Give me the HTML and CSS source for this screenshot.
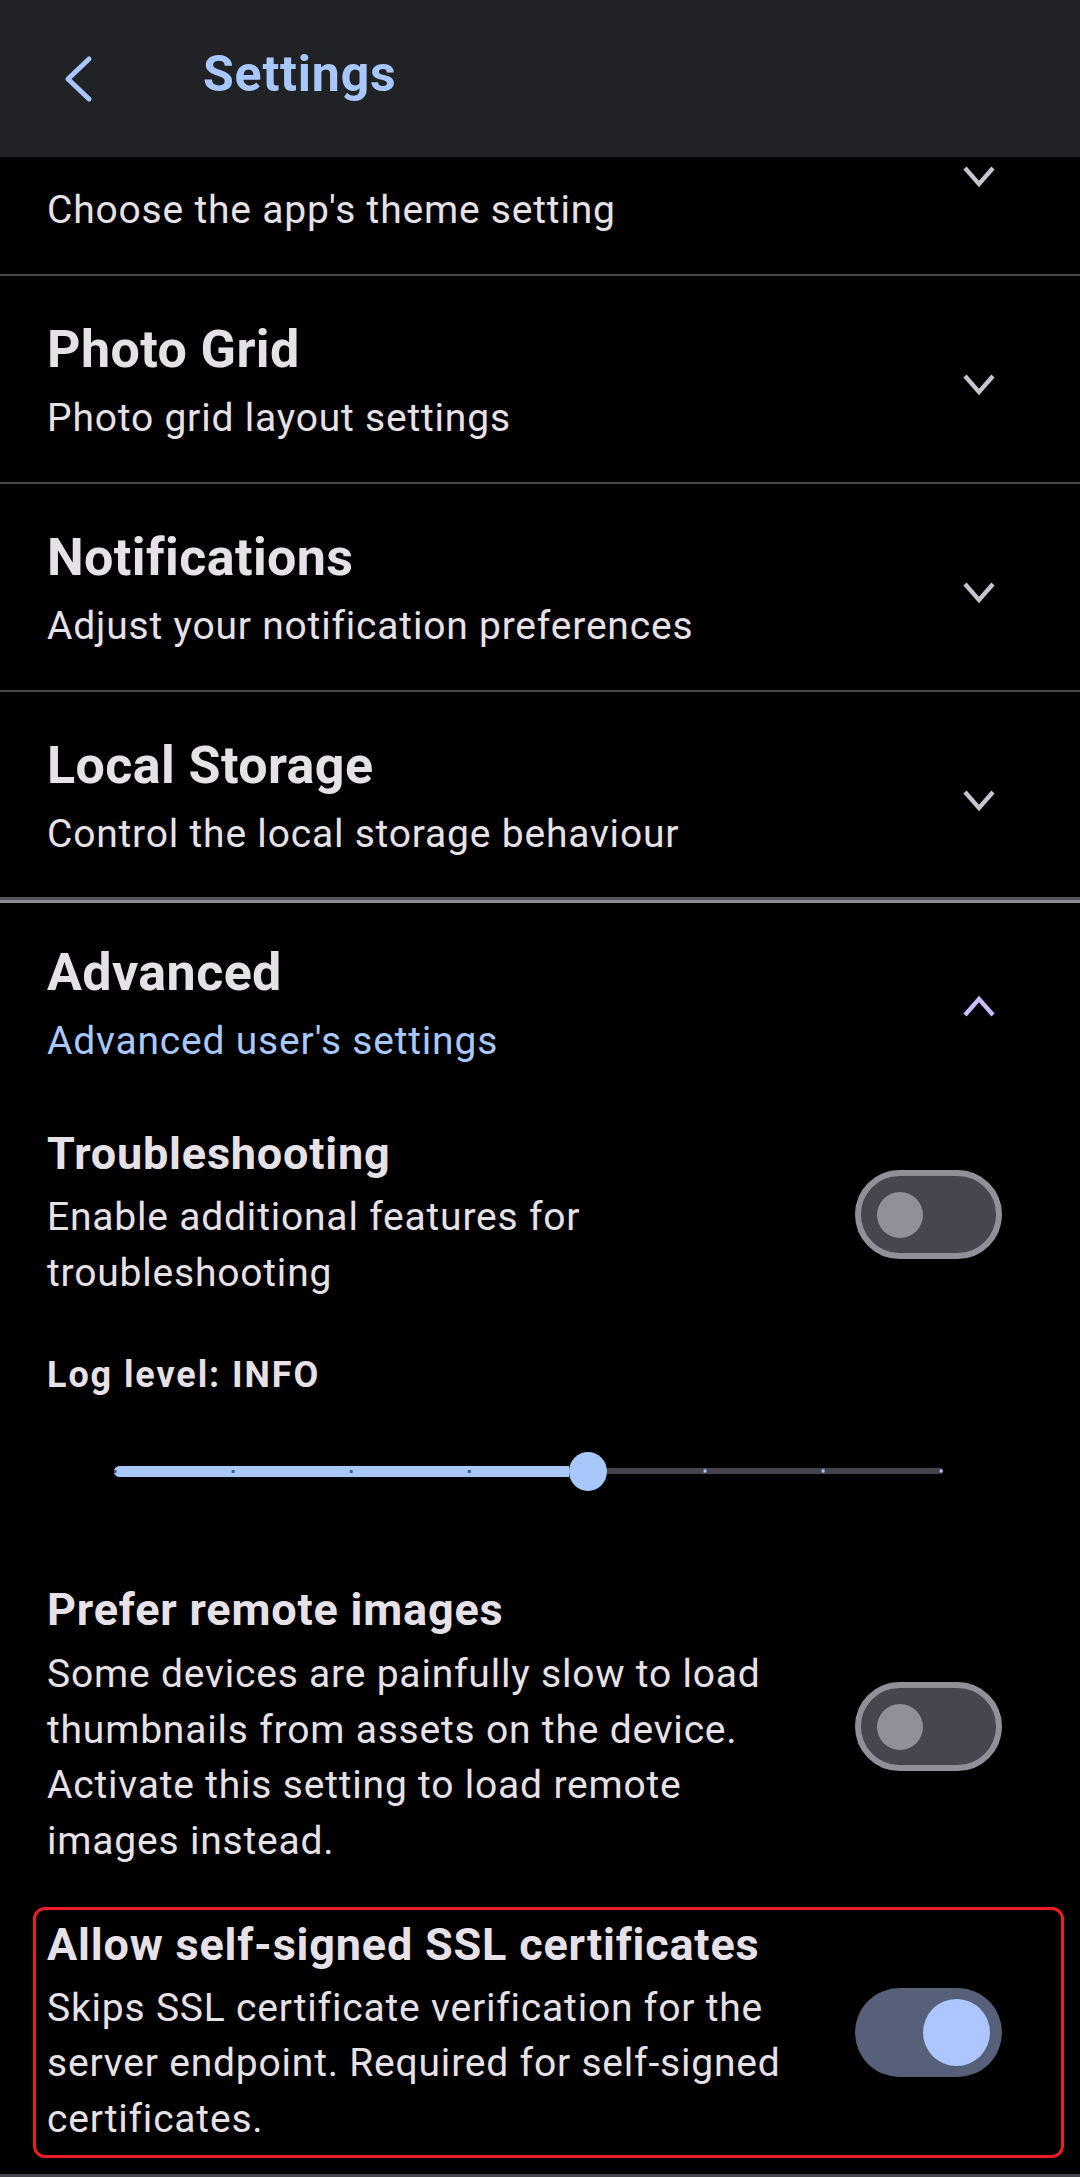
FILE: index.html
```html
<!DOCTYPE html>
<html lang="en">
<head>
<meta charset="utf-8">
<title>Settings</title>
<link rel="stylesheet" href="styles.css">
</head>
<body>
<header class="appbar">
  <svg class="back" width="36" height="52" viewBox="0 0 36 52" aria-hidden="true">
    <polyline points="29,6 8,26 29,46" fill="none" stroke="#a8c7fa" stroke-width="5" stroke-linecap="round" stroke-linejoin="round"/>
  </svg>
  <h1 class="appbar-title">Settings</h1>
</header>
<main class="viewport">
  <div class="list">
    <section class="tile tile-first">
      <div class="tile-text">
        <div class="tile-title-spacer" aria-hidden="true"></div>
        <div class="tile-sub">Choose the app's theme setting</div>
      </div>
      <svg class="chev" width="36" height="24" viewBox="0 0 36 24" aria-hidden="true"><polyline points="4,4 18,20 32,4" fill="none" stroke="#cac4d0" stroke-width="4.2"/></svg>
    </section>
    <section class="tile">
      <div class="tile-text">
        <div class="tile-title">Photo Grid</div>
        <div class="tile-sub">Photo grid layout settings</div>
      </div>
      <svg class="chev" width="36" height="24" viewBox="0 0 36 24" aria-hidden="true"><polyline points="4,4 18,20 32,4" fill="none" stroke="#cac4d0" stroke-width="4.2"/></svg>
    </section>
    <section class="tile">
      <div class="tile-text">
        <div class="tile-title">Notifications</div>
        <div class="tile-sub">Adjust your notification preferences</div>
      </div>
      <svg class="chev" width="36" height="24" viewBox="0 0 36 24" aria-hidden="true"><polyline points="4,4 18,20 32,4" fill="none" stroke="#cac4d0" stroke-width="4.2"/></svg>
    </section>
    <section class="tile tile-last">
      <div class="tile-text">
        <div class="tile-title">Local Storage</div>
        <div class="tile-sub">Control the local storage behaviour</div>
      </div>
      <svg class="chev" width="36" height="24" viewBox="0 0 36 24" aria-hidden="true"><polyline points="4,4 18,20 32,4" fill="none" stroke="#cac4d0" stroke-width="4.2"/></svg>
    </section>

    <section class="expanded">
      <div class="tile tile-head">
        <div class="tile-text">
          <div class="tile-title">Advanced</div>
          <div class="tile-sub tile-sub-accent">Advanced user's settings</div>
        </div>
        <svg class="chev" width="36" height="24" viewBox="0 0 36 24" aria-hidden="true"><polyline points="4,20 18,4 32,20" fill="none" stroke="#cdbdff" stroke-width="4.2"/></svg>
      </div>

      <div class="setting setting-trouble">
        <div class="setting-text">
          <div class="setting-title">Troubleshooting</div>
          <div class="setting-sub">Enable additional features for troubleshooting</div>
        </div>
        <div class="switch switch-off"><span class="knob"></span></div>
      </div>

      <div class="log-level">Log level: INFO</div>

      <div class="slider">
        <div class="track-active"></div>
        <div class="thumb"></div>
        <div class="track-inactive"></div>
      </div>

      <div class="setting setting-prefer">
        <div class="setting-text">
          <div class="setting-title">Prefer remote images</div>
          <div class="setting-sub">Some devices are painfully slow to load thumbnails from assets on the device. Activate this setting to load remote images instead.</div>
        </div>
        <div class="switch switch-off"><span class="knob"></span></div>
      </div>

      <div class="setting setting-highlight">
        <div class="setting-text">
          <div class="setting-title">Allow self-signed SSL certificates</div>
          <div class="setting-sub">Skips SSL certificate verification for the server endpoint. Required for self-signed certificates.</div>
        </div>
        <div class="switch switch-on"><span class="knob"></span></div>
      </div>
    </section>
    <div class="bottom-divider"></div>
  </div>
</main>
</body>
</html>
```

FILE: styles.css
```css
html, body {
  margin: 0;
  padding: 0;
}
body {
  width: 1080px;
  height: 2177px;
  overflow: hidden;
  background: #000;
  color: #e6e1e6;
  font-family: Roboto, "Noto Sans", "Liberation Sans", sans-serif;
  display: flex;
  flex-direction: column;
}

/* App bar */
.appbar {
  height: 157px;
  flex: 0 0 157px;
  background: #212226;
  display: flex;
  align-items: flex-start;
}
.back {
  display: block;
  margin: 53px 0 0 60px;
}
.appbar-title {
  margin: 46px 0 0 107px;
  font-size: 50px;
  line-height: 56px;
  font-weight: 700;
  color: #a8c7fa;
  letter-spacing: 0.8px;
}

/* Scrolled list */
.viewport {
  flex: 1 1 auto;
  overflow: hidden;
}
.list {
  display: flex;
  flex-direction: column;
}

.tile {
  display: flex;
  align-items: center;
  padding: 46px 83px 36px 47px;
  border-bottom: 2px solid #48464d;
}
.tile-first {
  margin-top: -89px;
}
.tile-last {
  padding-bottom: 35px;
  border-bottom: none;
}
.tile-text {
  flex: 1 1 auto;
}
.tile-title {
  font-size: 52px;
  line-height: 56px;
  font-weight: 700;
  letter-spacing: 0.4px;
  color: #e6e1e6;
}
.tile-title-spacer {
  height: 56px;
}
.tile-sub {
  margin-top: 12px;
  font-size: 39px;
  line-height: 56px;
  letter-spacing: 0.8px;
  color: #e6e1e6;
}
.tile-sub-accent {
  color: #a8c7fa;
}
.chev {
  display: block;
  flex: 0 0 36px;
}

/* Expanded section */
.expanded {
  border-top: 3px solid #57545d;
  display: flex;
  flex-direction: column;
}
.tile-head {
  border-top: 3px solid #8f8b95;
  border-bottom: none;
  padding: 42px 83px 0 47px;
}

.setting {
  display: flex;
  align-items: center;
  gap: 48px;
  padding: 0 78px 0 47px;
}
.setting-text {
  flex: 1 1 auto;
  min-width: 0;
}
.setting-title {
  font-size: 45px;
  line-height: 52px;
  font-weight: 700;
  letter-spacing: 0.8px;
  color: #e6e1e6;
}
.setting-sub {
  margin-top: 10px;
  font-size: 39px;
  line-height: 55.6px;
  letter-spacing: 0.8px;
  color: #e6e1e6;
}
.setting-trouble {
  margin-top: 59px;
}
.setting-prefer {
  margin-top: 83px;
}
.setting-prefer .setting-sub {
  margin-top: 11px;
}
.setting-highlight {
  margin: 37px 16px 0 33px;
  padding: 9px 59px 8px 11px;
  border: 3px solid #ec1c26;
  border-radius: 12px;
}

/* Switches */
.switch {
  flex: 0 0 147px;
  width: 147px;
  height: 89px;
  box-sizing: border-box;
  border-radius: 45px;
  display: flex;
  align-items: center;
}
.switch-off {
  background: #49454f;
  border: 6px solid #938f99;
  padding-left: 16px;
}
.switch-off .knob {
  width: 46px;
  height: 46px;
  border-radius: 50%;
  background: #938f99;
}
.switch-on {
  background: #566179;
  justify-content: flex-end;
  padding-right: 12px;
}
.switch-on .knob {
  width: 67px;
  height: 67px;
  border-radius: 50%;
  background: #adc6fd;
}

/* Log level + slider */
.log-level {
  margin: 52px 0 0 47px;
  font-size: 36px;
  line-height: 44px;
  font-weight: 700;
  letter-spacing: 1.9px;
  color: #e6e1e6;
}
.slider {
  margin: 44px 0 0 114px;
  width: 829px;
  height: 60px;
  display: flex;
  align-items: center;
}
.track-active {
  width: 455px;
  height: 11px;
  border-radius: 6px 0 0 6px;
  background-color: #a8c7fa;
  background-image: radial-gradient(circle, #4a5a7c 1.4px, transparent 2px);
  background-size: 118.1px 100%;
  background-position: -58px 0;
  background-repeat: repeat-x;
}
.thumb {
  width: 38px;
  height: 39px;
  border-radius: 50%;
  background: #a8c7fa;
}
.track-inactive {
  width: 336px;
  height: 6px;
  border-radius: 0 3px 3px 0;
  background-color: #45434b;
  background-image: radial-gradient(circle, #a8c7fa 1.4px, transparent 2px);
  background-size: 118.1px 100%;
  background-position: 39px 0;
  background-repeat: repeat-x;
}

.bottom-divider {
  margin-top: 16px;
  height: 3px;
  background: #47454c;
}
```
